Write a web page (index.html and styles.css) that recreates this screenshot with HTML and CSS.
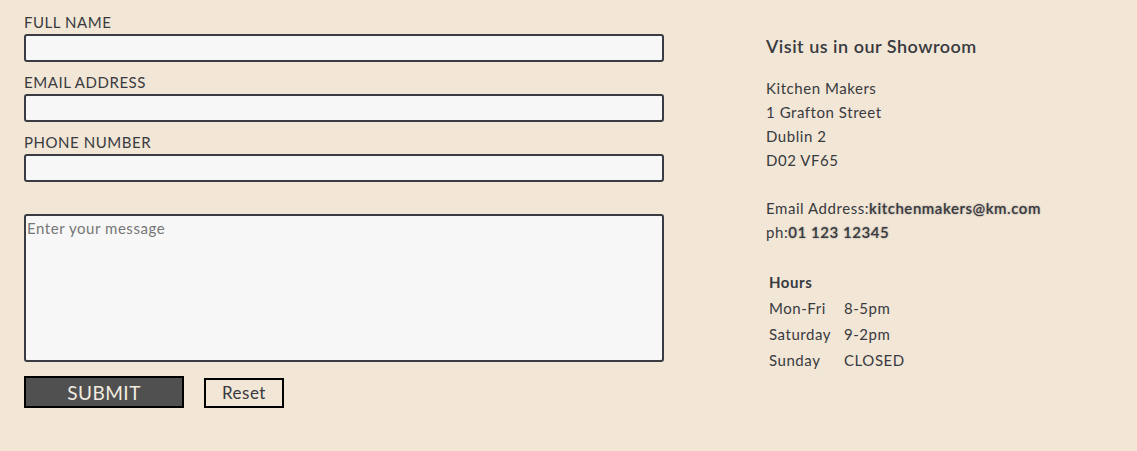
FILE: index.html
```html
<!DOCTYPE html>
<html lang="en">
<head>
<meta charset="utf-8">
<title>Contact</title>
<link rel="stylesheet" href="styles.css">
</head>
<body>
<main class="page">
  <form class="contact-form">
    <div class="field">
      <label class="field-label" for="name">FULL NAME</label>
      <input class="field-input" id="name" type="text">
    </div>
    <div class="field">
      <label class="field-label" for="email">EMAIL ADDRESS</label>
      <input class="field-input" id="email" type="email">
    </div>
    <div class="field">
      <label class="field-label" for="phone">PHONE NUMBER</label>
      <input class="field-input" id="phone" type="tel">
    </div>
    <textarea class="field-message" placeholder="Enter your message"></textarea>
    <div class="actions">
      <button class="btn-submit" type="button">SUBMIT</button>
      <button class="btn-reset" type="reset">Reset</button>
    </div>
  </form>
  <aside class="showroom">
    <h2 class="showroom-title">Visit us in our Showroom</h2>
    <p class="address">Kitchen Makers<br>1 Grafton Street<br>Dublin 2<br>D02 VF65</p>
    <p class="contact">Email Address:<a class="contact-link" href="#">kitchenmakers@km.com</a><br>ph:<a class="contact-link" href="#">01 123 12345</a></p>
    <table class="hours">
      <tr><th class="hours-head" colspan="2">Hours</th></tr>
      <tr><td class="day">Mon-Fri</td><td>8-5pm</td></tr>
      <tr><td class="day">Saturday</td><td>9-2pm</td></tr>
      <tr><td class="day">Sunday</td><td>CLOSED</td></tr>
    </table>
  </aside>
</main>
</body>
</html>
```
FILE: styles.css
```css
html, body {
  margin: 0;
  padding: 0;
  background: #f2e6d6;
}
body {
  font-family: "Lato", "Open Sans", sans-serif;
  color: #383a40;
  font-size: 15px;
  letter-spacing: 0.55px;
}
.page {
  display: flex;
  padding: 12px 24px 0 24px;
  gap: 102px;
}
.contact-form {
  width: 640px;
  display: flex;
  flex-direction: column;
}
.field {
  display: flex;
  flex-direction: column;
  margin-bottom: 10px;
}
.field-label {
  line-height: 20px;
  margin-bottom: 2px;
  font-size: 15px;
}
.field-input {
  box-sizing: border-box;
  height: 28px;
  width: 640px;
  border: 2px solid #393c43;
  border-radius: 3px;
  background: #f7f7f7;
  margin: 0;
  font: inherit;
}
.field-message {
  box-sizing: border-box;
  width: 640px;
  height: 148px;
  margin: 22px 0 0 0;
  border: 2px solid #393c43;
  border-radius: 3px;
  background: #f7f7f7;
  font-family: inherit;
  font-size: 15px;
  letter-spacing: 0.55px;
  padding: 3px 1px;
  resize: none;
}
.field-message::placeholder {
  color: #767676;
}
.actions {
  display: flex;
  align-items: flex-end;
  gap: 20px;
  margin-top: 14px;
}
.btn-submit {
  box-sizing: border-box;
  width: 160px;
  height: 32px;
  background: #505050;
  border: 2px solid #000;
  color: #f2ece0;
  font-family: inherit;
  font-size: 19px;
  letter-spacing: 0.5px;
  padding: 0;
}
.btn-reset {
  box-sizing: border-box;
  width: 80px;
  height: 30px;
  background: #f2e6d6;
  border: 2px solid #000;
  color: #383a40;
  font-family: inherit;
  font-size: 17px;
  letter-spacing: 0.5px;
  padding: 0 0 2px 0;
}
.showroom {
  padding-top: 22px;
}
.showroom-title {
  margin: 0;
  font-size: 18px;
  font-weight: 600;
  line-height: 24px;
  letter-spacing: 0.5px;
}
.address, .contact {
  margin: 18px 0 0 0;
  line-height: 24px;
}
.contact {
  margin-top: 24px;
}
.contact-link {
  color: #383a40;
  text-decoration: none;
  font-weight: 600;
  text-shadow: 0 0 2px rgba(0,0,0,0.35);
}
.hours {
  margin-top: 24px;
  border-spacing: 2px;
}
.hours td, .hours th {
  padding: 1px;
  line-height: 22px;
  text-align: left;
}
.hours-head {
  font-weight: 700;
}
.day {
  width: 71px;
}
```
